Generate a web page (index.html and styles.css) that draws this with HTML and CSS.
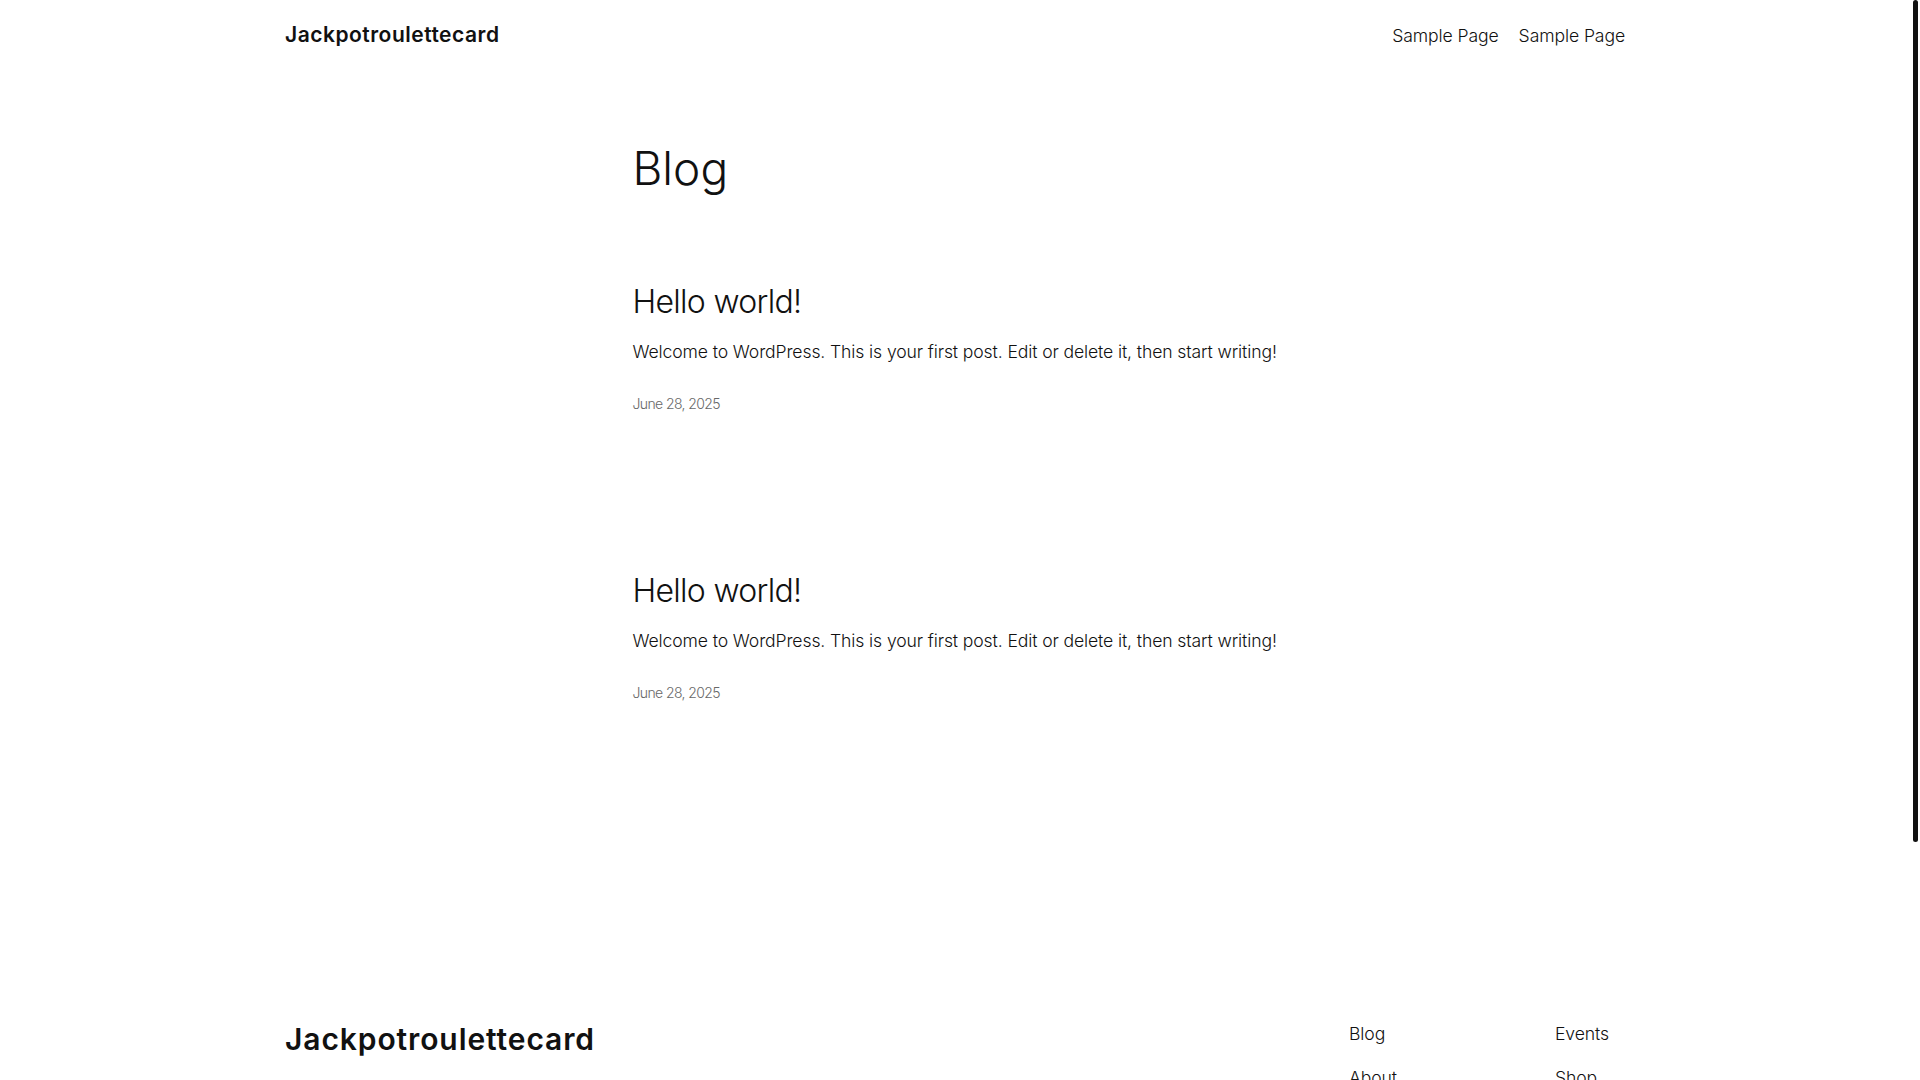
FILE: index.html
```html
<!DOCTYPE html>
<html lang="en">
<head>
<meta charset="utf-8">
<title>Blog – Jackpotroulettecard</title>
<link rel="stylesheet" href="styles.css">
</head>
<body>
<div class="scroll-thumb" aria-hidden="true"></div>
<header class="site-header wide">
  <a class="site-title" href="#">Jackpotroulettecard</a>
  <nav class="header-nav">
    <a href="#">Sample Page</a>
    <a href="#">Sample Page</a>
  </nav>
</header>
<main class="site-main">
  <div class="content">
    <h1 class="page-title">Blog</h1>
    <ul class="post-list">
      <li class="post">
        <h2 class="post-title"><a href="#">Hello world!</a></h2>
        <p class="post-excerpt">Welcome to WordPress. This is your first post. Edit or delete it, then start writing!</p>
        <div class="post-date">June 28, 2025</div>
      </li>
      <li class="post">
        <h2 class="post-title"><a href="#">Hello world!</a></h2>
        <p class="post-excerpt">Welcome to WordPress. This is your first post. Edit or delete it, then start writing!</p>
        <div class="post-date">June 28, 2025</div>
      </li>
    </ul>
  </div>
</main>
<footer class="site-footer wide">
  <div class="footer-top">
    <a class="footer-title" href="#">Jackpotroulettecard</a>
    <div class="footer-nav">
      <ul class="footer-col">
        <li><a href="#">Blog</a></li>
        <li><a href="#">About</a></li>
        <li><a href="#">FAQs</a></li>
        <li><a href="#">Authors</a></li>
      </ul>
      <ul class="footer-col">
        <li><a href="#">Events</a></li>
        <li><a href="#">Shop</a></li>
        <li><a href="#">Patterns</a></li>
        <li><a href="#">Themes</a></li>
      </ul>
    </div>
  </div>
  <div class="footer-bottom">
    <span>Twenty Twenty-Five</span>
    <span>Designed with WordPress</span>
  </div>
</footer>
</body>
</html>
```

FILE: styles.css
```css
html {
  background: #ffffff;
}

body {
  margin: 0;
  padding-right: 10px;
  background: #ffffff;
  color: #111111;
  font-family: Inter, "Noto Sans", "DejaVu Sans", sans-serif;
  font-weight: 300;
  font-size: 18px;
}

a {
  color: inherit;
  text-decoration: none;
}

ul {
  list-style: none;
  margin: 0;
  padding: 0;
}

.scroll-thumb {
  position: fixed;
  top: 0;
  right: 2px;
  width: 5px;
  height: 842px;
  border-radius: 3px;
  background: #111111;
  z-index: 10;
}

.wide {
  max-width: 1340px;
  margin-left: auto;
  margin-right: auto;
}

.site-header {
  height: 70px;
  display: flex;
  align-items: center;
  justify-content: space-between;
}

.site-title {
  font-size: 21px;
  font-weight: 600;
  letter-spacing: 0.5px;
  line-height: 28px;
}

.header-nav {
  display: flex;
  gap: 20px;
  font-size: 17.6px;
  line-height: 27px;
  letter-spacing: -0.1px;
}

.site-main {
  padding-top: 72px;
}

.content {
  width: 645px;
  margin: 0 auto;
}

.page-title {
  margin: 0;
  font-size: 46px;
  font-weight: 300;
  line-height: 52px;
  letter-spacing: 0;
}

.post-list {
  margin-top: 88px;
  display: flex;
  flex-direction: column;
  gap: 157px;
}

.post-title {
  margin: 0;
  font-size: 32px;
  font-weight: 300;
  line-height: 40px;
  letter-spacing: -0.7px;
}

.post-excerpt {
  margin: 16px 0 0;
  font-size: 17.6px;
  line-height: 27px;
  letter-spacing: -0.12px;
  white-space: nowrap;
}

.post-date {
  margin-top: 28px;
  font-size: 14px;
  line-height: 21px;
  color: #686868;
  letter-spacing: -0.6px;
}

.site-footer {
  margin-top: 317px;
  padding-bottom: 60px;
}

.footer-top {
  display: flex;
  justify-content: space-between;
  align-items: flex-start;
}

.footer-title {
  font-size: 30px;
  font-weight: 600;
  line-height: 36px;
  letter-spacing: 0.9px;
  margin-top: 1px;
}

.footer-nav {
  display: grid;
  grid-template-columns: 206px 70px;
}

.footer-col {
  display: flex;
  flex-direction: column;
  gap: 17px;
  font-size: 17.6px;
  line-height: 27px;
  letter-spacing: -0.1px;
}

.footer-bottom {
  margin-top: 80px;
  display: flex;
  justify-content: space-between;
  font-size: 15px;
  line-height: 21px;
  color: #111111;
}
```
